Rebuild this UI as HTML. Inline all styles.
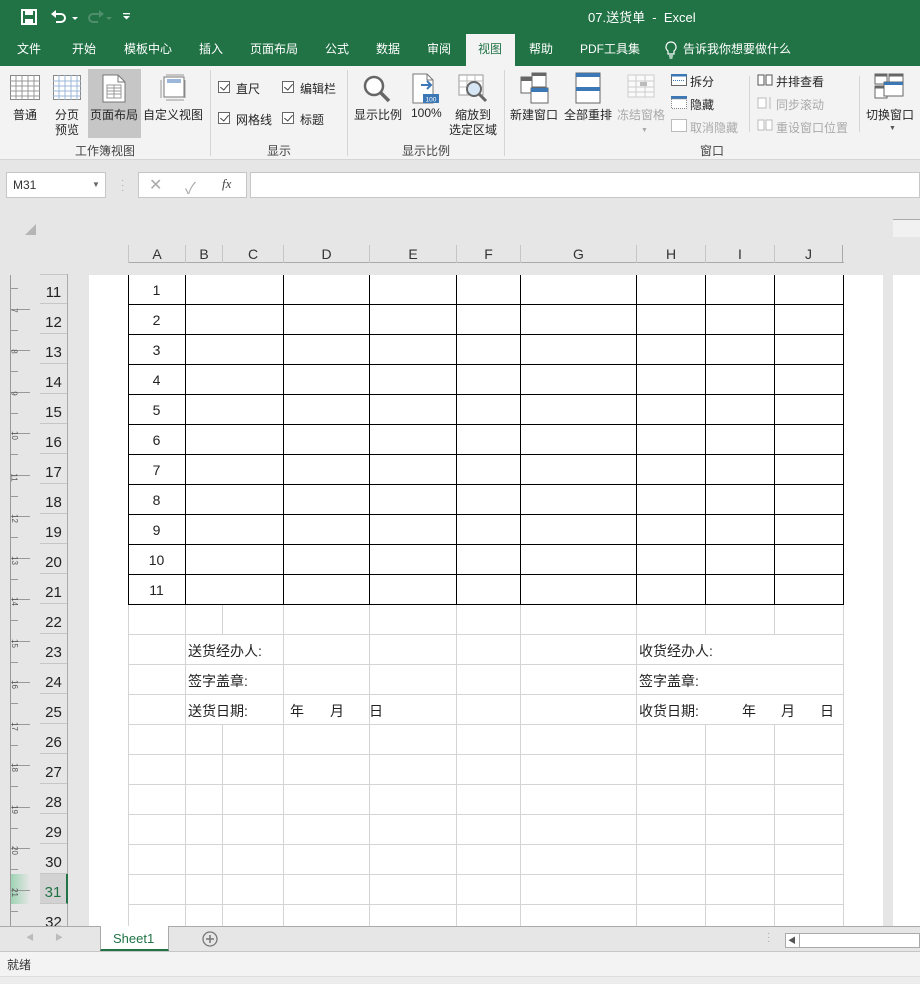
<!DOCTYPE html>
<html><head><meta charset="utf-8"><style>
*{margin:0;padding:0;box-sizing:border-box}
body{width:920px;height:984px;overflow:hidden;background:#e6e6e6;font-family:"Liberation Sans","Noto Sans CJK SC",sans-serif;font-size:12px;color:#222;position:relative}
.a{position:absolute}
.t{white-space:nowrap}
.tab{position:absolute;top:40px;color:#fff;font-size:12px}
.rb{position:absolute;font-size:12px;color:#262626;white-space:nowrap}
.gl{position:absolute;font-size:12px;color:#444;white-space:nowrap}
.cb{position:absolute;width:12px;height:12px;border:1px solid #666;background:#fff}
.cb:after{content:"";position:absolute;left:3px;top:0px;width:4px;height:7px;border-right:1.3px solid #444;border-bottom:1.3px solid #444;transform:rotate(40deg)}
.sep{position:absolute;top:70px;width:1px;height:86px;background:#d5d5d5}
.ch{position:absolute;top:245px;height:18px;border-left:1px solid #c6c6c6;text-align:center;font-size:14px;line-height:19px;color:#333}
.rh{position:absolute;left:40px;width:27px;height:30px;border-bottom:1px solid #c6c6c6;font-size:15px;text-align:center;line-height:38px;color:#222}
.vb{position:absolute;width:1px;background:#000}
.vg{position:absolute;width:1px;background:#d4d4d4}
.hb{position:absolute;left:128px;width:716px;height:1px;background:#000}
.hg{position:absolute;left:128px;width:716px;height:1px;background:#d4d4d4}
.n{position:absolute;left:128px;width:57px;text-align:center;font-size:14px;color:#222}
.ct{position:absolute;font-size:14px;color:#222;white-space:nowrap}
.rn{position:absolute;left:12px;font-size:8px;color:#555;transform:rotate(90deg)}
.tk{position:absolute;left:10px;width:8px;height:1px;background:#999}
.tl{position:absolute;left:10px;width:20px;height:1px;background:#999}
</style></head><body>
<!-- title bar -->
<div class="a" style="left:0;top:0;width:920px;height:66px;background:#217346"></div>
<svg class="a" style="left:20px;top:8px" width="18" height="18" viewBox="0 0 18 18"><rect x="2" y="2" width="14" height="14" fill="none" stroke="#fff" stroke-width="2"/><rect x="5" y="2" width="8" height="5" fill="#fff"/><rect x="5" y="11" width="8" height="5" fill="#fff"/></svg>
<svg class="a" style="left:50px;top:8px" width="30" height="18" viewBox="0 0 30 18"><path d="M4 6h7a4 4 0 0 1 0 8H6" fill="none" stroke="#fff" stroke-width="2"/><path d="M1 6l5-4v8z" fill="#fff"/><path d="M22 9l3 3 3-3z" fill="#fff"/></svg>
<svg class="a" style="left:84px;top:8px" width="30" height="18" viewBox="0 0 30 18"><path d="M16 6H9a4 4 0 0 0 0 8h5" fill="none" stroke="#4f8e6b" stroke-width="2"/><path d="M20 6l-5-4v8z" fill="#4f8e6b"/><path d="M22 9l3 3 3-3z" fill="#4f8e6b"/></svg>
<svg class="a" style="left:122px;top:12px" width="9" height="9" viewBox="0 0 9 9"><rect x="1" y="1" width="7" height="1.3" fill="#fff"/><path d="M1 4h7l-3.5 3.5z" fill="#fff"/></svg>
<div class="a t" style="left:588px;top:7px;color:#fff;font-size:13px">07.送货单&nbsp; - &nbsp;Excel</div>
<div class="tab" style="left:17px">文件</div>
<div class="tab" style="left:72px">开始</div>
<div class="tab" style="left:124px">模板中心</div>
<div class="tab" style="left:199px">插入</div>
<div class="tab" style="left:250px">页面布局</div>
<div class="tab" style="left:325px">公式</div>
<div class="tab" style="left:376px">数据</div>
<div class="tab" style="left:427px">审阅</div>
<div class="a" style="left:466px;top:34px;width:49px;height:32px;background:#f3f3f3"></div>
<div class="tab" style="left:478px;color:#217346">视图</div>
<div class="tab" style="left:529px">帮助</div>
<div class="tab" style="left:580px">PDF工具集</div>
<svg class="a" style="left:664px;top:41px" width="14" height="18" viewBox="0 0 14 18"><path d="M7 1a5 5 0 0 0-3 9v3h6v-3a5 5 0 0 0-3-9z" fill="none" stroke="#fff" stroke-width="1.2"/><path d="M5 15h4M5.5 17h3" stroke="#fff" stroke-width="1.2"/></svg>
<div class="tab" style="left:683px">告诉我你想要做什么</div>
<!-- ribbon -->
<div class="a" style="left:0;top:66px;width:920px;height:94px;background:#f3f3f3;border-bottom:1px solid #d5d5d5"></div>
<div class="a" style="left:88px;top:69px;width:53px;height:69px;background:#c6c6c6"></div>
<svg class="a" style="left:10px;top:75px" width="30" height="26" viewBox="0 0 30 26"><rect x="0.5" y="0.5" width="29" height="24" fill="#fff" stroke="#888"/><path d="M0 6h30M0 11h30M0 16h30M0 21h30M6 0v25M12 0v25M18 0v25M24 0v25" stroke="#999"/></svg>
<svg class="a" style="left:53px;top:75px" width="28" height="26" viewBox="0 0 28 26"><rect x="0.5" y="0.5" width="27" height="24" fill="#fff" stroke="#888"/><path d="M0 6h28M0 11h28M0 16h28M0 21h28M6 0v25M12 0v25M18 0v25M24 0v25" stroke="#9bb7d9"/></svg>
<svg class="a" style="left:102px;top:74px" width="24" height="29" viewBox="0 0 24 29"><path d="M1 1h15l7 7v20H1z" fill="#fff" stroke="#777"/><path d="M16 1v7h7" fill="none" stroke="#777"/><path d="M5 11h14v13H5zM5 14h14M5 17h14M5 20h14M12 11v13" fill="none" stroke="#999"/></svg>
<svg class="a" style="left:158px;top:74px" width="30" height="28" viewBox="0 0 30 28"><rect x="6" y="3" width="20" height="20" fill="#fff" stroke="#777"/><rect x="9" y="5" width="14" height="4" fill="#9bb7d9"/><path d="M3 6v18M27 6v18M8 1h18M8 26h18" stroke="#999"/></svg>
<div class="rb" style="left:13px;top:106px">普通</div>
<div class="rb" style="left:55px;top:106px">分页</div>
<div class="rb" style="left:55px;top:121px">预览</div>
<div class="rb" style="left:90px;top:106px">页面布局</div>
<div class="rb" style="left:143px;top:106px">自定义视图</div>
<div class="gl" style="left:75px;top:142px">工作簿视图</div>
<div class="sep" style="left:210px"></div>
<div class="cb" style="left:218px;top:81px"></div><div class="rb" style="left:236px;top:80px">直尺</div>
<div class="cb" style="left:282px;top:81px"></div><div class="rb" style="left:300px;top:80px">编辑栏</div>
<div class="cb" style="left:218px;top:112px"></div><div class="rb" style="left:236px;top:111px">网格线</div>
<div class="cb" style="left:282px;top:112px"></div><div class="rb" style="left:300px;top:111px">标题</div>
<div class="gl" style="left:267px;top:142px">显示</div>
<div class="sep" style="left:347px"></div>
<svg class="a" style="left:362px;top:74px" width="30" height="30" viewBox="0 0 30 30"><circle cx="12" cy="12" r="9" fill="#fff" stroke="#666" stroke-width="2.5"/><path d="M18 18l9 9" stroke="#666" stroke-width="3.5"/></svg>
<svg class="a" style="left:412px;top:73px" width="28" height="32" viewBox="0 0 28 32"><path d="M1 1h14l6 6v23H1z" fill="#fff" stroke="#777"/><path d="M15 1v6h6" fill="none" stroke="#777"/><path d="M9 12h10M15 8l4 4-4 4" fill="none" stroke="#3c78b5" stroke-width="2"/><rect x="11" y="21" width="16" height="9" fill="#3c78b5"/><text x="19" y="28.5" font-size="6.5" fill="#fff" text-anchor="middle" font-family="Liberation Sans">100</text></svg>
<svg class="a" style="left:458px;top:74px" width="32" height="30" viewBox="0 0 32 30"><rect x="1" y="1" width="24" height="20" fill="#fff" stroke="#999"/><path d="M1 7h24M1 13h24M9 1v20M17 1v20" stroke="#bbb"/><circle cx="16" cy="15" r="7" fill="#d6e6f5" stroke="#666" stroke-width="2"/><path d="M21 20l7 7" stroke="#666" stroke-width="3"/></svg>
<div class="rb" style="left:354px;top:106px">显示比例</div>
<div class="rb" style="left:411px;top:106px">100%</div>
<div class="rb" style="left:455px;top:106px">缩放到</div>
<div class="rb" style="left:449px;top:121px">选定区域</div>
<div class="gl" style="left:402px;top:142px">显示比例</div>
<div class="sep" style="left:504px"></div>
<svg class="a" style="left:520px;top:72px" width="30" height="32" viewBox="0 0 30 32"><rect x="1" y="5" width="16" height="16" fill="#fff" stroke="#666"/><rect x="1" y="5" width="16" height="4" fill="#666"/><rect x="12" y="1" width="14" height="14" fill="#fff" stroke="#666"/><rect x="12" y="1" width="14" height="3" fill="#666"/><rect x="11" y="16" width="17" height="15" fill="#fff" stroke="#666"/><rect x="11" y="16" width="17" height="4" fill="#3c78b5"/></svg>
<svg class="a" style="left:575px;top:72px" width="26" height="32" viewBox="0 0 26 32"><rect x="1" y="1" width="24" height="30" fill="#fff" stroke="#666"/><rect x="1" y="1" width="24" height="4" fill="#3c78b5"/><rect x="1" y="15" width="24" height="4" fill="#3c78b5"/></svg>
<svg class="a" style="left:627px;top:74px" width="30" height="26" viewBox="0 0 30 26"><rect x="1" y="1" width="26" height="22" fill="#fafafa" stroke="#ccc"/><path d="M1 7h26M1 13h26M1 18h26M9 1v22M18 1v22" stroke="#ccc"/><rect x="13" y="8" width="7" height="4" fill="#bbb"/></svg>
<div class="rb" style="left:510px;top:106px">新建窗口</div>
<div class="rb" style="left:564px;top:106px">全部重排</div>
<div class="rb" style="left:617px;top:106px;color:#aaa">冻结窗格</div>
<div class="a" style="left:641px;top:127px;font-size:7px;color:#aaa">▼</div>
<svg class="a" style="left:671px;top:74px" width="16" height="12"><rect x="0.5" y="0.5" width="15" height="11" fill="#fff" stroke="#666"/><rect x="0" y="0" width="16" height="2.5" fill="#3c78b5"/><path d="M2 6.5h12" stroke="#3c78b5" stroke-dasharray="1 1"/></svg>
<div class="rb" style="left:690px;top:73px">拆分</div>
<svg class="a" style="left:671px;top:96px" width="16" height="13"><rect x="0" y="0" width="16" height="3" fill="#3c78b5"/><rect x="0.5" y="3" width="15" height="9.5" fill="#fff" stroke="#888" stroke-dasharray="1 1"/></svg>
<div class="rb" style="left:690px;top:96px">隐藏</div>
<svg class="a" style="left:671px;top:119px" width="16" height="13"><rect x="0.5" y="0.5" width="15" height="12" fill="#fff" stroke="#bbb"/></svg>
<div class="rb" style="left:690px;top:119px;color:#aaa">取消隐藏</div>
<div class="sep" style="left:749px;top:76px;height:56px"></div>
<svg class="a" style="left:757px;top:74px" width="16" height="12"><path d="M1 1h6v10H1zM9 1h6v10H9z" fill="#fff" stroke="#555"/></svg>
<div class="rb" style="left:776px;top:73px">并排查看</div>
<svg class="a" style="left:757px;top:96px" width="16" height="14"><path d="M1 2h8v10H1z" fill="#fff" stroke="#bbb"/><path d="M13 1v12" stroke="#bbb"/></svg>
<div class="rb" style="left:776px;top:96px;color:#aaa">同步滚动</div>
<svg class="a" style="left:757px;top:119px" width="16" height="12"><path d="M1 1h6v10H1zM9 1h6v10H9z" fill="#fff" stroke="#bbb"/></svg>
<div class="rb" style="left:776px;top:119px;color:#aaa">重设窗口位置</div>
<div class="gl" style="left:700px;top:142px">窗口</div>
<div class="sep" style="left:859px;top:76px;height:56px"></div>
<svg class="a" style="left:874px;top:73px" width="30" height="26" viewBox="0 0 30 26"><rect x="1" y="1" width="12" height="10" fill="#fff" stroke="#666"/><rect x="1" y="1" width="12" height="2.5" fill="#666"/><rect x="15" y="1" width="14" height="10" fill="#fff" stroke="#666"/><rect x="15" y="1" width="14" height="2.5" fill="#666"/><rect x="1" y="13" width="12" height="12" fill="#fff" stroke="#666"/><rect x="1" y="13" width="12" height="2.5" fill="#666"/><rect x="10" y="9" width="19" height="14" fill="#fff" stroke="#666"/><rect x="10" y="9" width="19" height="3" fill="#3c78b5"/></svg>
<div class="rb" style="left:866px;top:106px">切换窗口</div>
<div class="a" style="left:889px;top:125px;font-size:7px;color:#555">▼</div>
<!-- formula bar -->
<div class="a" style="left:0;top:161px;width:920px;height:39px;background:#e6e6e6"></div>
<div class="a" style="left:6px;top:172px;width:100px;height:26px;background:#fff;border:1px solid #c6c6c6"></div>
<div class="a t" style="left:13px;top:178px;font-size:12px;color:#333">M31</div>
<div class="a" style="left:92px;top:180px;font-size:8px;color:#666">▼</div>
<div class="a" style="left:121px;top:178px;color:#aaa;font-size:10px;line-height:5px">·<br>·<br>·</div>
<div class="a" style="left:138px;top:172px;width:109px;height:26px;background:#fff;border:1px solid #c6c6c6"></div>
<div class="a" style="left:149px;top:175px;color:#aaa;font-size:16px">✕</div>
<div class="a" style="left:185px;top:175px;color:#aaa;font-size:16px">✓</div>
<div class="a" style="left:222px;top:176px;color:#444;font-size:13px;font-style:italic;font-family:'Liberation Serif',serif">fx</div>
<div class="a" style="left:250px;top:172px;width:670px;height:26px;background:#fff;border:1px solid #c6c6c6"></div>
<!-- corner & col headers -->
<svg class="a" style="left:25px;top:224px" width="12" height="12"><path d="M11 0v11H0z" fill="#b5b5b5"/></svg>
<div class="a" style="left:893px;top:219px;width:27px;height:18px;background:#f1f1f1;border-top:1px solid #aaa"></div>
<div class="a" style="left:128px;top:262px;width:716px;height:1px;background:#aaa"></div>
<div class="ch" style="left:128px;width:57px">A</div>
<div class="ch" style="left:185px;width:37px">B</div>
<div class="ch" style="left:222px;width:61px">C</div>
<div class="ch" style="left:283px;width:86px">D</div>
<div class="ch" style="left:369px;width:87px">E</div>
<div class="ch" style="left:456px;width:64px">F</div>
<div class="ch" style="left:520px;width:116px">G</div>
<div class="ch" style="left:636px;width:69px">H</div>
<div class="ch" style="left:705px;width:69px">I</div>
<div class="ch" style="left:774px;width:69px;border-right:1px solid #aaa">J</div>
<!-- page -->
<div class="a" style="left:89px;top:275px;width:794px;height:651px;background:#fff"></div>
<div class="a" style="left:893px;top:275px;width:27px;height:651px;background:#fff"></div>
<!-- vertical ruler -->
<div class="a" style="left:10px;top:275px;width:1px;height:651px;background:#999"></div>
<div class="tk" style="top:288px"></div><div class="tl" style="top:309px"></div><div class="rn" style="top:306px">7</div>
<div class="tk" style="top:330px"></div><div class="tl" style="top:350px"></div><div class="rn" style="top:347px">8</div>
<div class="tk" style="top:371px"></div><div class="tl" style="top:392px"></div><div class="rn" style="top:389px">9</div>
<div class="tk" style="top:413px"></div><div class="tl" style="top:433px"></div><div class="rn" style="top:431px;left:10px">10</div>
<div class="tk" style="top:454px"></div><div class="tl" style="top:475px"></div><div class="rn" style="top:473px;left:10px">11</div>
<div class="tk" style="top:496px"></div><div class="tl" style="top:516px"></div><div class="rn" style="top:514px;left:10px">12</div>
<div class="tk" style="top:537px"></div><div class="tl" style="top:558px"></div><div class="rn" style="top:556px;left:10px">13</div>
<div class="tk" style="top:579px"></div><div class="tl" style="top:599px"></div><div class="rn" style="top:597px;left:10px">14</div>
<div class="tk" style="top:620px"></div><div class="tl" style="top:641px"></div><div class="rn" style="top:639px;left:10px">15</div>
<div class="tk" style="top:662px"></div><div class="tl" style="top:682px"></div><div class="rn" style="top:680px;left:10px">16</div>
<div class="tk" style="top:703px"></div><div class="tl" style="top:724px"></div><div class="rn" style="top:722px;left:10px">17</div>
<div class="tk" style="top:745px"></div><div class="tl" style="top:765px"></div><div class="rn" style="top:763px;left:10px">18</div>
<div class="tk" style="top:786px"></div><div class="tl" style="top:807px"></div><div class="rn" style="top:805px;left:10px">19</div>
<div class="tk" style="top:828px"></div><div class="tl" style="top:848px"></div><div class="rn" style="top:846px;left:10px">20</div>
<div class="a" style="left:11px;top:874px;width:19px;height:30px;background:linear-gradient(90deg,#9fd3b4,#e6e6e6)"></div>
<div class="tk" style="top:869px"></div><div class="tl" style="top:890px"></div><div class="rn" style="top:888px;left:10px">21</div>
<div class="tk" style="top:911px"></div>
<!-- row headers -->
<div class="a" style="left:67px;top:274px;width:1px;height:652px;background:#aaa"></div>
<div class="a" style="left:40px;top:274px;width:27px;height:1px;background:#c6c6c6"></div>
<div class="rh" style="top:274px">11</div><div class="rh" style="top:304px">12</div><div class="rh" style="top:334px">13</div><div class="rh" style="top:364px">14</div><div class="rh" style="top:394px">15</div><div class="rh" style="top:424px">16</div><div class="rh" style="top:454px">17</div><div class="rh" style="top:484px">18</div><div class="rh" style="top:514px">19</div><div class="rh" style="top:544px">20</div><div class="rh" style="top:574px">21</div><div class="rh" style="top:604px">22</div><div class="rh" style="top:634px">23</div><div class="rh" style="top:664px">24</div><div class="rh" style="top:694px">25</div><div class="rh" style="top:724px">26</div><div class="rh" style="top:754px">27</div><div class="rh" style="top:784px">28</div><div class="rh" style="top:814px">29</div><div class="rh" style="top:844px">30</div>
<div class="rh" style="top:874px;background:#d2d2d2;color:#217346;border-right:2px solid #217346;width:28px">31</div>
<div class="rh" style="top:904px">32</div>
<!-- gray grid rows 22-32 -->
<div class="hg" style="top:634px"></div><div class="hg" style="top:664px"></div><div class="hg" style="top:694px"></div><div class="hg" style="top:724px"></div><div class="hg" style="top:754px"></div><div class="hg" style="top:784px"></div><div class="hg" style="top:814px"></div><div class="hg" style="top:844px"></div><div class="hg" style="top:874px"></div><div class="hg" style="top:904px"></div>
<div class="vg" style="left:128px;top:604px;height:322px"></div>
<div class="vg" style="left:185px;top:604px;height:322px"></div>
<div class="vg" style="left:222px;top:604px;height:30px"></div><div class="vg" style="left:222px;top:724px;height:202px"></div>
<div class="vg" style="left:283px;top:604px;height:322px"></div>
<div class="vg" style="left:369px;top:604px;height:322px"></div>
<div class="vg" style="left:456px;top:604px;height:322px"></div>
<div class="vg" style="left:520px;top:604px;height:322px"></div>
<div class="vg" style="left:636px;top:604px;height:322px"></div>
<div class="vg" style="left:705px;top:604px;height:30px"></div><div class="vg" style="left:705px;top:724px;height:202px"></div>
<div class="vg" style="left:774px;top:604px;height:30px"></div><div class="vg" style="left:774px;top:724px;height:202px"></div>
<div class="vg" style="left:843px;top:604px;height:322px"></div>
<!-- black table -->
<div class="hb" style="top:304px"></div><div class="hb" style="top:334px"></div><div class="hb" style="top:364px"></div><div class="hb" style="top:394px"></div><div class="hb" style="top:424px"></div><div class="hb" style="top:454px"></div><div class="hb" style="top:484px"></div><div class="hb" style="top:514px"></div><div class="hb" style="top:544px"></div><div class="hb" style="top:574px"></div><div class="hb" style="top:604px"></div>
<div class="vb" style="left:128px;top:275px;height:330px"></div>
<div class="vb" style="left:185px;top:275px;height:330px"></div>
<div class="vb" style="left:283px;top:275px;height:330px"></div>
<div class="vb" style="left:369px;top:275px;height:330px"></div>
<div class="vb" style="left:456px;top:275px;height:330px"></div>
<div class="vb" style="left:520px;top:275px;height:330px"></div>
<div class="vb" style="left:636px;top:275px;height:330px"></div>
<div class="vb" style="left:705px;top:275px;height:330px"></div>
<div class="vb" style="left:774px;top:275px;height:330px"></div>
<div class="vb" style="left:843px;top:275px;height:330px"></div>
<div class="n" style="top:282px">1</div><div class="n" style="top:312px">2</div><div class="n" style="top:342px">3</div><div class="n" style="top:372px">4</div><div class="n" style="top:402px">5</div><div class="n" style="top:432px">6</div><div class="n" style="top:462px">7</div><div class="n" style="top:492px">8</div><div class="n" style="top:522px">9</div><div class="n" style="top:552px">10</div><div class="n" style="top:582px">11</div>
<!-- footer text -->
<div class="ct" style="left:188px;top:641px">送货经办人:</div>
<div class="ct" style="left:188px;top:671px">签字盖章:</div>
<div class="ct" style="left:188px;top:701px">送货日期:</div>
<div class="ct" style="left:290px;top:701px">年</div><div class="ct" style="left:330px;top:701px">月</div><div class="ct" style="left:369px;top:701px">日</div>
<div class="ct" style="left:639px;top:641px">收货经办人:</div>
<div class="ct" style="left:639px;top:671px">签字盖章:</div>
<div class="ct" style="left:639px;top:701px">收货日期:</div>
<div class="ct" style="left:742px;top:701px">年</div><div class="ct" style="left:781px;top:701px">月</div><div class="ct" style="left:820px;top:701px">日</div>
<!-- sheet tabs -->
<div class="a" style="left:0;top:926px;width:920px;height:24px;background:#e6e6e6;border-top:1px solid #aaa"></div>
<div class="a" style="left:26px;top:932px;font-size:8px;color:#bbb">◀</div>
<div class="a" style="left:55px;top:932px;font-size:8px;color:#bbb">▶</div>
<div class="a" style="left:100px;top:926px;width:69px;height:25px;background:#fff;border:1px solid #aaa;border-top:none;border-bottom:2px solid #217346"></div>
<div class="a t" style="left:113px;top:931px;font-size:13px;color:#217346">Sheet1</div>
<svg class="a" style="left:202px;top:931px" width="16" height="16"><circle cx="8" cy="8" r="7" fill="none" stroke="#777" stroke-width="1.3"/><path d="M8 4v8M4 8h8" stroke="#777" stroke-width="1.5"/></svg>
<div class="a" style="left:767px;top:932px;color:#aaa;font-size:10px;line-height:4px">·<br>·<br>·</div>
<div class="a" style="left:785px;top:933px;width:135px;height:15px;background:#fff;border:1px solid #aaa"></div>
<div class="a" style="left:785px;top:933px;width:15px;height:15px;border-right:1px solid #aaa;font-size:8px;color:#555;text-align:center;line-height:15px">◀</div>
<!-- status -->
<div class="a" style="left:0;top:951px;width:920px;height:25px;background:#f3f3f3;border-top:1px solid #c6c6c6"></div>
<div class="a t" style="left:7px;top:956px;font-size:12px;color:#333">就绪</div>
<div class="a" style="left:0;top:976px;width:920px;height:8px;background:#ececec;border-top:1px solid #ddd"></div>
</body></html>
